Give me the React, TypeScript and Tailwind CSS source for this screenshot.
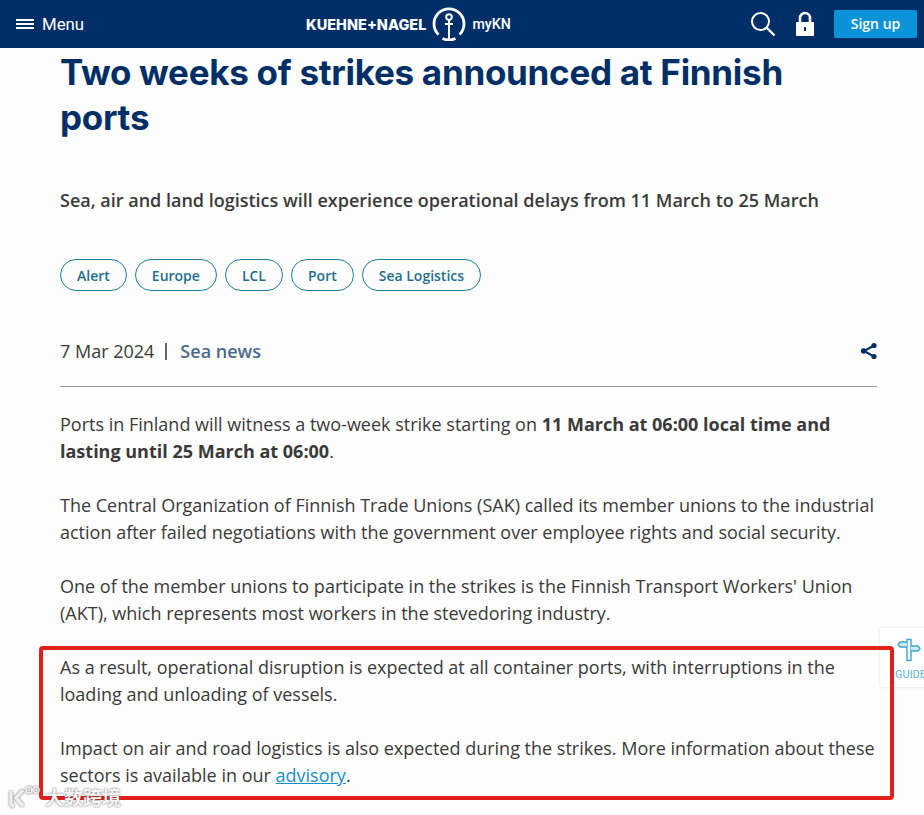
import React from "react";

const tags = ["Alert", "Europe", "LCL", "Port", "Sea Logistics"];

function Anchor() {
  return (
    <svg width="34" height="34" viewBox="0 0 34 34" fill="none" stroke="#fff">
      <path d="M6.500 27.500A15 15 0 1 1 27.500 27.500" strokeWidth="2.800" />
      <path d="M10.500 31.500A16 16 0 0 0 23.500 31.500" strokeWidth="2.800" />
      <circle cx="17" cy="10" r="2.800" strokeWidth="1.900" />
      <path d="M17 12.500V32M13 17h8" strokeWidth="2" />
    </svg>
  );
}

export default function App() {
  return (
    <div className="relative h-[815px] w-[924px] overflow-hidden bg-[#fdfdfd] font-['Open_Sans',sans-serif] text-[18px] leading-[27px] text-[#3a3a3a]">
      <header className="flex h-12 items-center bg-[#002f67] pl-4 pr-[7px] text-white">
        <div className="flex w-[290px] items-center gap-2">
          <svg width="18" height="12" viewBox="0 0 18 12" fill="none" stroke="#fff" strokeWidth="2">
            <path d="M0 2h18M0 6h18M0 10h18" />
          </svg>
          <span className="font-['Roboto',sans-serif] text-[16.800px]">Menu</span>
        </div>
        <div className="flex items-center">
          <span className="font-['Inter',sans-serif] text-[14.500px] font-extrabold">KUEHNE+NAGEL</span>
          <span className="ml-[6px] flex"><Anchor /></span>
          <span className="ml-[6px] font-['Roboto',sans-serif] text-[14.200px] font-medium">myKN</span>
        </div>
        <div className="flex flex-1 items-center justify-end">
          <svg width="26" height="26" viewBox="0 0 26 26" fill="none" stroke="#fff" strokeWidth="2">
            <circle cx="10.500" cy="10.500" r="8.500" />
            <path d="M16.500 16.500l8 8" strokeWidth="2.400" />
          </svg>
          <svg className="ml-[19px]" width="20" height="26" viewBox="0 0 20 26" fill="none">
            <path d="M5 12V7a5 5 0 0 1 10 0v5" stroke="#fff" strokeWidth="2.600" />
            <path fillRule="evenodd" d="M2 11h16a1 1 0 0 1 1 1v12a1 1 0 0 1-1 1H2a1 1 0 0 1-1-1V12a1 1 0 0 1 1-1zm7 5v4h2v-4z" fill="#fff" />
          </svg>
          <button className="ml-[19px] flex h-[28px] w-[83px] items-center justify-center rounded-[2px] bg-[#0a93d6] pb-[2px] text-[14px] font-semibold text-white">
            Sign up
          </button>
        </div>
      </header>

      <main className="pl-[60px] pr-[47px]">
        <h1 className="pt-[2px] font-['Inter',sans-serif] text-[35px] font-bold leading-[45px] tracking-[-0.280px] text-[#002f67]">
          Two weeks of strikes announced at Finnish ports
        </h1>
        <p className="mt-[47px] text-[18px] font-semibold leading-[27px]">
          Sea, air and land logistics will experience operational delays from 11 March to 25 March
        </p>
        <div className="mt-[45px] flex gap-2">
          {tags.map((t) => (
            <span key={t} className="flex h-8 items-center rounded-full border border-[#1f7d9c] px-4 text-[14px] font-semibold text-[#1f6f8f]">
              {t}
            </span>
          ))}
        </div>
        <div className="mt-[40px] flex h-[40px] items-center justify-between">
          <div className="flex items-center">
            <span>7 Mar 2024</span>
            <span className="ml-[11px] mr-[13px] h-[17px] w-[2px] bg-[#666666]" />
            <span className="font-semibold text-[#4a6a8c]">Sea news</span>
          </div>
          <svg className="mr-[-1px]" width="18" height="18" viewBox="0 0 18 18" fill="#002f67" stroke="#002f67">
            <path d="M14 3.500L4 9l10 5.500" fill="none" strokeWidth="2" />
            <circle cx="14" cy="3.500" r="2.600" strokeWidth="0" />
            <circle cx="3.700" cy="9" r="2.800" strokeWidth="0" />
            <circle cx="14" cy="14.500" r="2.600" strokeWidth="0" />
          </svg>
        </div>
        <hr className="mt-[15px] border-0 border-t border-[#999999]" />
        <div className="mt-6 flex flex-col gap-[27px]">
          <p>
            Ports in Finland will witness a two-week strike starting on <b className="font-bold">11 March at 06:00 local time and lasting until 25 March at 06:00</b>.
          </p>
          <p>
            The Central Organization of Finnish Trade Unions (SAK) called its member unions to the industrial action after failed negotiations with the government over employee rights and social security.
          </p>
          <p>
            One of the member unions to participate in the strikes is the Finnish Transport Workers' Union (AKT), which represents most workers in the stevedoring industry.
          </p>
          <p>
            As a result, operational disruption is expected at all container ports, with interruptions in the loading and unloading of vessels.
          </p>
          <p>
            Impact on air and road logistics is also expected during the strikes. More information about these sectors is available in our <a className="text-[#1a8fc4] underline">advisory</a>.
          </p>
        </div>
      </main>

      <div className="absolute left-[880px] top-[628px] flex h-[59px] w-[60px] flex-col items-start rounded-l-[3px] bg-white pl-[17px] pt-[10px] shadow-[0_0_3px_rgba(0,0,0,0.12)]">
        <svg width="24" height="24" viewBox="0 0 24 24" fill="none" stroke="#3aa6cc" strokeWidth="1.400">
          <path d="M10 1.500h4v21h-4z" />
          <path d="M10 4H3L1 6.500 3 9h7M14 8h7l2 2.500-2 2.500h-7" fill="#cfeaf5" />
        </svg>
        <span className="ml-[-2px] mt-[7px] font-['Roboto',sans-serif] text-[11px] leading-3 text-[#5ab4d4]">GUIDE</span>
      </div>

      <div className="absolute left-[39px] top-[646px] h-[154px] w-[855px] rounded-[4px] border-4 border-[#e2201a]" />

      <div className="absolute left-[8px] top-[785px] flex items-center gap-[5px] text-[#f6f6f6] [text-shadow:0_0_2px_rgba(70,70,70,0.85)]">
        <svg width="32" height="24" viewBox="0 0 32 24" fill="none" stroke="#eeeeee" strokeWidth="3.500" style={{ filter: "drop-shadow(0 0 1px rgba(70,70,70,0.8))" }}>
          <path d="M3 6v12c0 2 1 3 3 3M15 5L8 13l7 8" />
          <circle cx="21" cy="5" r="3" strokeWidth="1.500" />
          <circle cx="28" cy="5" r="3" strokeWidth="1.500" />
        </svg>
        <span className="font-['Noto_Sans_CJK_SC',sans-serif] text-[19px] font-bold leading-6">大数跨境</span>
      </div>
    </div>
  );
}
